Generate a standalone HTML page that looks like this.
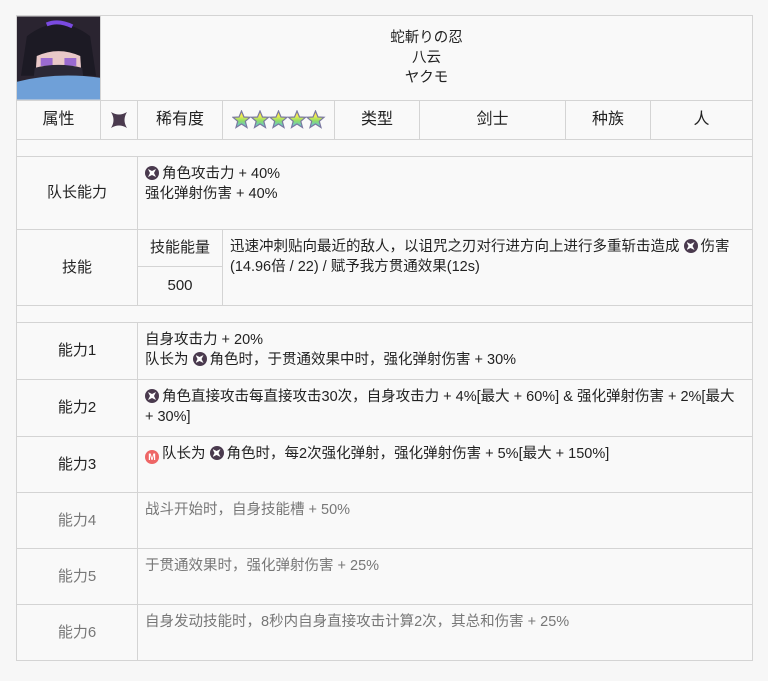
<!DOCTYPE html>
<html><head><meta charset="utf-8"><style>
body{margin:0;width:768px;height:681px;background:#f7f7f7;position:relative;overflow:hidden;font-family:"Liberation Sans","Noto Sans CJK SC",sans-serif;font-size:14.5px;color:#222}
.c{position:absolute;box-sizing:border-box;border:1px solid #d4d4d4;background:#f9f9f9;display:flex;align-items:center;justify-content:center;text-align:center;line-height:20px}
.l{justify-content:flex-start;align-items:flex-start;text-align:left;padding:7px 7px;font-size:14.5px}
.g{color:#777}
.ic{display:inline-block;width:14px;height:14px;border-radius:50%;background:#4a3a4e;vertical-align:-2px;position:relative;margin-right:3px}
.ic::after{content:"";position:absolute;left:3px;top:3px;width:8px;height:8px;background:#fff;clip-path:polygon(0 0,50% 25%,100% 0,75% 50%,100% 100%,50% 75%,0 100%,25% 50%)}
.m{display:inline-block;width:14px;height:14px;border-radius:50%;background:#e66;vertical-align:-2px;margin-right:3px;color:#fff;font-size:9px;line-height:14px;text-align:center;font-weight:bold}
</style></head><body>
<div class="c" style="left:16px;top:15px;width:85px;height:86px;padding:0;overflow:hidden;background:#ddd">
<svg width="84" height="84" viewBox="0 0 84 84"><rect width="84" height="84" fill="#2a2430"/><path d="M10 20 Q42 -5 74 20 L80 60 L4 60Z" fill="#1c1a24"/><path d="M20 40 Q42 30 64 40 L66 70 L18 70Z" fill="#e9c8c8"/><rect x="24" y="42" width="12" height="8" fill="#9a6ad0"/><rect x="48" y="42" width="12" height="8" fill="#9a6ad0"/><path d="M18 52 Q42 46 66 52 L68 70 L16 70Z" fill="#2b2836"/><path d="M0 66 Q40 56 84 62 L84 84 L0 84Z" fill="#6fa0d8"/><path d="M30 8 Q42 3 56 10" stroke="#7a4ae0" stroke-width="4" fill="none"/></svg></div>
<div class="c" style="left:100px;top:15px;width:653px;height:86px;line-height:20px">蛇斬りの忍<br>八云<br>ヤクモ</div>
<div class="c" style="left:16px;top:100px;width:85px;height:40px;font-size:16px">属性</div>
<div class="c" style="left:100px;top:100px;width:38px;height:40px"><svg width="16" height="16" viewBox="0 0 16 16"><path d="M0 0 Q8 5 16 0 Q11 8 16 16 Q8 11 0 16 Q5 8 0 0Z" fill="#4a3a4e"/></svg></div>
<div class="c" style="left:137px;top:100px;width:86px;height:40px;font-size:16px">稀有度</div>
<div class="c" style="left:222px;top:100px;width:113px;height:40px"><svg width="94" height="20" viewBox="0 0 94 20"><defs><linearGradient id="r" x1="0" y1="0" x2="0" y2="1"><stop offset="0" stop-color="#ffd93a"/><stop offset=".3" stop-color="#f0ee50"/><stop offset=".6" stop-color="#8fdc6a"/><stop offset="1" stop-color="#5ac0f0"/></linearGradient></defs><g fill="url(#r)" stroke="#7a78a0" stroke-width="1.2"><path id="s" d="M9.5 1 L12 7 L18 7.3 L13.3 11.3 L15 17.5 L9.5 14 L4 17.5 L5.7 11.3 L1 7.3 L7 7Z"/><use href="#s" x="18.5"/><use href="#s" x="37"/><use href="#s" x="55.5"/><use href="#s" x="74"/></g></svg></div>
<div class="c" style="left:334px;top:100px;width:86px;height:40px;font-size:16px">类型</div>
<div class="c" style="left:419px;top:100px;width:147px;height:40px;font-size:16px">剑士</div>
<div class="c" style="left:565px;top:100px;width:86px;height:40px;font-size:16px">种族</div>
<div class="c" style="left:650px;top:100px;width:103px;height:40px;font-size:16px">人</div>
<div class="c" style="left:16px;top:139px;width:737px;height:18px"></div>
<div class="c" style="left:16px;top:156px;width:122px;height:74px;font-size:15px">队长能力</div>
<div class="c l" style="left:137px;top:156px;width:616px;height:74px"><div><span class="ic"></span>角色攻击力 + 40%<br>强化弹射伤害 + 40%</div></div>
<div class="c" style="left:16px;top:229px;width:122px;height:77px;font-size:15px">技能</div>
<div class="c" style="left:137px;top:229px;width:86px;height:38px;font-size:15px">技能能量</div>
<div class="c" style="left:137px;top:266px;width:86px;height:40px;font-size:15px">500</div>
<div class="c l" style="left:222px;top:229px;width:531px;height:77px"><div>迅速冲刺贴向最近的敌人，以诅咒之刃对行进方向上进行多重斩击造成 <span class="ic"></span>伤害(14.96倍 / 22) / 赋予我方贯通效果(12s)</div></div>
<div class="c" style="left:16px;top:305px;width:737px;height:18px"></div>
<div class="c" style="left:16px;top:322px;width:122px;height:58px;font-size:15px">能力1</div>
<div class="c l" style="left:137px;top:322px;width:616px;height:58px"><div>自身攻击力 + 20%<br>队长为 <span class="ic"></span>角色时，于贯通效果中时，强化弹射伤害 + 30%</div></div>
<div class="c" style="left:16px;top:379px;width:122px;height:58px;font-size:15px">能力2</div>
<div class="c l" style="left:137px;top:379px;width:616px;height:58px"><div><span class="ic"></span>角色直接攻击每直接攻击30次，自身攻击力 + 4%[最大 + 60%] &amp; 强化弹射伤害 + 2%[最大 + 30%]</div></div>
<div class="c" style="left:16px;top:436px;width:122px;height:57px;font-size:15px">能力3</div>
<div class="c l" style="left:137px;top:436px;width:616px;height:57px"><div><span class="m">M</span>队长为 <span class="ic"></span>角色时，每2次强化弹射，强化弹射伤害 + 5%[最大 + 150%]</div></div>
<div class="c g" style="left:16px;top:492px;width:122px;height:57px;font-size:15px">能力4</div>
<div class="c l g" style="left:137px;top:492px;width:616px;height:57px"><div>战斗开始时，自身技能槽 + 50%</div></div>
<div class="c g" style="left:16px;top:548px;width:122px;height:57px;font-size:15px">能力5</div>
<div class="c l g" style="left:137px;top:548px;width:616px;height:57px"><div>于贯通效果时，强化弹射伤害 + 25%</div></div>
<div class="c g" style="left:16px;top:604px;width:122px;height:57px;font-size:15px">能力6</div>
<div class="c l g" style="left:137px;top:604px;width:616px;height:57px"><div>自身发动技能时，8秒内自身直接攻击计算2次，其总和伤害 + 25%</div></div>
</body></html>
